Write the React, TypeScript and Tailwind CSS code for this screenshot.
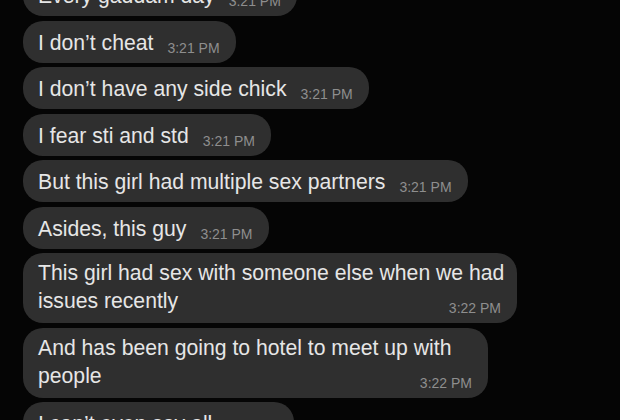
type Message = {
  lines: string[];
  time: string;
  width?: string;
};

const messages: Message[] = [
  { lines: ['Every gaddam day'], time: '3:21 PM' },
  { lines: ['I don’t cheat'], time: '3:21 PM' },
  { lines: ['I don’t have any side chick'], time: '3:21 PM' },
  { lines: ['I fear sti and std'], time: '3:21 PM' },
  { lines: ['But this girl had multiple sex partners'], time: '3:21 PM' },
  { lines: ['Asides, this guy'], time: '3:21 PM' },
  {
    lines: ['This girl had sex with someone else when we had', 'issues recently'],
    time: '3:22 PM',
    width: 'w-[494px]',
  },
  {
    lines: ['And has been going to hotel to meet up with', 'people'],
    time: '3:22 PM',
    width: 'w-[465px]',
  },
  { lines: ['I can’t even say all'], time: '3:22 PM' },
];

function Bubble({ msg }: { msg: Message }) {
  if (msg.lines.length === 1) {
    return (
      <div className="flex w-fit items-end rounded-[20px] bg-[#2f2f2f] pl-[15px] pr-[16px]">
        <span className="whitespace-nowrap pt-[8px] pb-[6px] text-[21.2px] leading-[28px] text-[#e6e6e6]">
          {msg.lines[0]}
        </span>
        <span className="mb-[7px] ml-[14px] whitespace-nowrap text-[14px] leading-[16px] text-[#8e8e8e]">
          {msg.time}
        </span>
      </div>
    );
  }
  return (
    <div className={`flex flex-col rounded-[20px] bg-[#2f2f2f] pl-[15px] pr-[16px] pb-[7px] ${msg.width ?? ''}`}>
      <div className="whitespace-nowrap pt-[6px] text-[21.2px] leading-[28px] text-[#e6e6e6]">
        {msg.lines.map((line, i) => (
          <div key={i}>{line}</div>
        ))}
      </div>
      <span className="-mt-[15px] self-end whitespace-nowrap text-[14px] leading-[16px] text-[#8e8e8e]">
        {msg.time}
      </span>
    </div>
  );
}

export default function App() {
  return (
    <div
      className="h-[420px] w-[620px] overflow-hidden bg-[#050505]"
      style={{ fontFamily: '"Liberation Sans", Arial, sans-serif' }}
    >
      <div className="-mt-[26px] flex flex-col gap-[4.5px] pl-[23px]">
        {messages.map((msg, i) => (
          <Bubble key={i} msg={msg} />
        ))}
      </div>
    </div>
  );
}
